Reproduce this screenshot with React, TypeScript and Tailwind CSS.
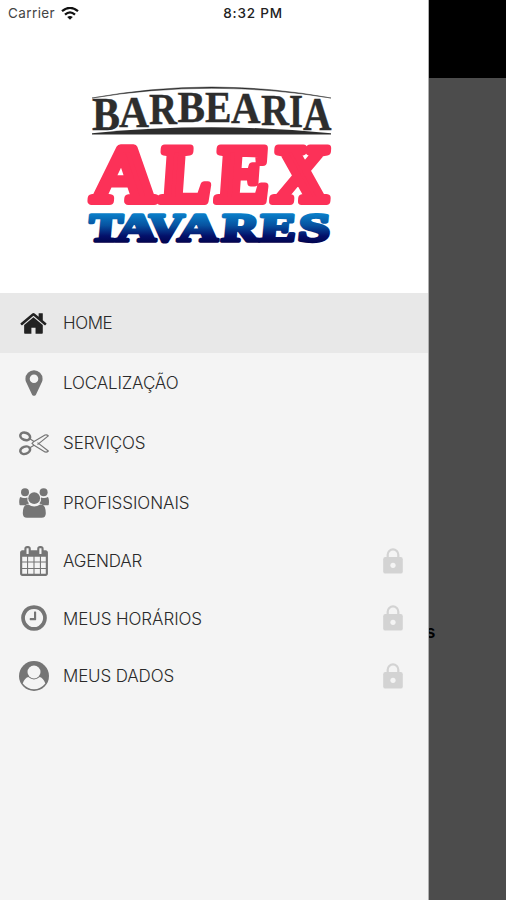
import type { ReactNode } from "react";
import clsx from "clsx";

const archLetters = [
  { char: "B", x: 92, base: 130.4, width: 28, size: 46.5 },
  { char: "A", x: 119, base: 127, width: 30, size: 45 },
  { char: "R", x: 149, base: 124, width: 28, size: 44 },
  { char: "B", x: 177.5, base: 122.3, width: 27.5, size: 43.5 },
  { char: "E", x: 205, base: 121.8, width: 26.5, size: 43.5 },
  { char: "A", x: 231, base: 123, width: 29.5, size: 43.5 },
  { char: "R", x: 261, base: 125.2, width: 28, size: 44.5 },
  { char: "I", x: 289, base: 127.4, width: 14, size: 46 },
  { char: "A", x: 303, base: 130, width: 28.5, size: 47 },
];

const alexLetters = [
  { char: "A", x: 91, width: 64 },
  { char: "L", x: 159.5, width: 50 },
  { char: "E", x: 215.5, width: 52 },
  { char: "X", x: 271.5, width: 56 },
];

const tavaresLetters = [
  { char: "T", x: 88, width: 33 },
  { char: "A", x: 115.5, width: 40 },
  { char: "V", x: 147, width: 35.5 },
  { char: "A", x: 177.5, width: 40 },
  { char: "R", x: 221, width: 37 },
  { char: "E", x: 259, width: 36 },
  { char: "S", x: 297.5, width: 31.5 },
];

function Logo() {
  return (
    <svg className="w-[260px] h-[170px]" viewBox="79 80 260 170">
      <defs>
        <linearGradient id="tavares" gradientUnits="userSpaceOnUse" x1="0" y1="-29" x2="0" y2="1">
          <stop offset="0" stopColor="#0a86cf" />
          <stop offset="0.45" stopColor="#0752a0" />
          <stop offset="0.8" stopColor="#03106a" />
          <stop offset="1" stopColor="#020652" />
        </linearGradient>
      </defs>
      <path d="M92 98Q212 76 331 98Q212 78.5 92 98Z" fill="#2d2d2d" stroke="#2d2d2d" strokeWidth="0.5" />
      <path d="M92 133.2Q212 121.5 331 133.2V134.4H92Z" fill="#2d2d2d" />
      <g fill="#2d2d2d" stroke="#2d2d2d" strokeWidth="0.4" fontFamily="Liberation Serif, serif" fontWeight="700">
        {archLetters.map((l, i) => (
          <text key={i} x={l.x} y={l.base} fontSize={l.size} textLength={l.width} lengthAdjust="spacingAndGlyphs">
            {l.char}
          </text>
        ))}
      </g>
      <g
        fill="#fc3158"
        stroke="#fc3158"
        strokeWidth="8"
        strokeLinejoin="round"
        fontFamily="Liberation Serif, serif"
        fontWeight="700"
        fontSize="80"
      >
        {alexLetters.map((l) => (
          <text
            key={l.char}
            transform={`translate(${l.x} 201) skewX(-4)`}
            textLength={l.width}
            lengthAdjust="spacingAndGlyphs"
          >
            {l.char}
          </text>
        ))}
      </g>
      <g
        fill="url(#tavares)"
        stroke="url(#tavares)"
        strokeWidth="3.6"
        strokeLinejoin="round"
        fontFamily="Liberation Serif, serif"
        fontWeight="700"
        fontSize="39.5"
      >
        {tavaresLetters.map((l, i) => (
          <text
            key={i}
            transform={`translate(${l.x} 241) skewX(-5)`}
            textLength={l.width}
            lengthAdjust="spacingAndGlyphs"
          >
            {l.char}
          </text>
        ))}
      </g>
    </svg>
  );
}

function HomeIcon() {
  return (
    <svg className="size-[29px] text-[#222]" viewBox="0 0 1792 1792" fill="currentColor">
      <path d="M1408 992v480q0 26-19 45t-45 19h-384v-384h-256v384h-384q-26 0-45-19t-19-45v-480q0-1 .5-3t.5-3l575-474 575 474q1 2 1 6zm223-69l-62 74q-8 9-21 11h-3q-13 0-21-7l-692-577-692 577q-12 8-24 7-13-2-21-11l-62-74q-8-10-7-23.5t11-21.5l719-599q32-26 76-26t76 26l244 204v-195q0-14 9-23t23-9h192q14 0 23 9t9 23v408l219 182q10 8 11 21.5t-7 23.5z" />
    </svg>
  );
}

function MarkerIcon() {
  return (
    <svg className="size-[30px]" viewBox="0 0 1792 1792" fill="currentColor">
      <path d="M1152 640q0-106-75-181t-181-75-181 75-75 181 75 181 181 75 181-75 75-181zm256 0q0 109-33 179l-364 774q-16 33-47.5 52t-67.5 19-67.5-19-46.5-52l-365-774q-33-70-33-179 0-212 150-362t362-150 362 150 150 362z" />
    </svg>
  );
}

function ScissorsIcon() {
  return (
    <svg className="size-[30px]" viewBox="0 0 30 30" fill="none" stroke="currentColor">
      <ellipse cx="6.2" cy="8.4" rx="5" ry="3.6" strokeWidth="2.5" transform="rotate(20 6.2 8.4)" />
      <ellipse cx="6.2" cy="22.2" rx="5" ry="3.6" strokeWidth="2.5" transform="rotate(-20 6.2 22.2)" />
      <path
        d="M10.5 10.6L15 13.4L26 7Q28 6.4 29.3 7.9L18.5 16.6M10.5 20L15 17.2L26 23.9Q28 24.4 29.3 23L18.5 14.6M15 13.4L13 15.4L15 17.2"
        strokeWidth="1.2"
        strokeLinejoin="round"
      />
    </svg>
  );
}

function UsersIcon() {
  return (
    <svg className="size-[30px]" viewBox="0 0 30 30" fill="currentColor">
      <circle cx="6" cy="4.2" r="4" />
      <circle cx="24.6" cy="4.2" r="4" />
      <path d="M1.6 9Q4 10.6 8.4 9.4Q7.8 13.3 10 15.4Q7.6 15.8 6.4 17.3H1.4Q.2 17.2.2 14.2Q.2 9.8 1.6 9Z" />
      <path d="M28.7 9Q26.3 10.6 22 9.4Q22.6 13.3 20.4 15.4Q22.8 15.8 24 17.3H29Q30 17.2 30 14.2Q30 9.8 28.7 9Z" />
      <circle cx="15.2" cy="10.2" r="5.9" />
      <path d="M9.3 16.6Q15.2 20.4 21.2 16.6Q26.8 16.4 26.8 25.2Q26.8 29.8 22.5 29.8H8Q3.8 29.8 3.8 25.2Q3.8 16.4 9.3 16.6Z" />
    </svg>
  );
}

function CalendarIcon() {
  return (
    <svg className="size-[30px]" viewBox="0 0 1792 1792" fill="currentColor">
      <path d="M192 1664h288v-288h-288v288zm352 0h320v-288h-320v288zm-352-352h288v-320h-288v320zm352 0h320v-320h-320v320zm-352-384h288v-288h-288v288zm736 736h320v-288h-320v288zm-384-736h320v-288h-320v288zm768 736h288v-288h-288v288zm-384-352h320v-320h-320v320zm-352-864v-288q0-13-9.5-22.5t-22.5-9.5h-64q-13 0-22.5 9.5t-9.5 22.5v288q0 13 9.5 22.5t22.5 9.5h64q13 0 22.5-9.5t9.5-22.5zm736 864h288v-320h-288v320zm-384-384h320v-288h-320v288zm384 0h288v-288h-288v288zm32-480v-288q0-13-9.5-22.5t-22.5-9.5h-64q-13 0-22.5 9.5t-9.5 22.5v288q0 13 9.5 22.5t22.5 9.5h64q13 0 22.5-9.5t9.5-22.5zm384-64v1280q0 52-38 90t-90 38h-1408q-52 0-90-38t-38-90v-1280q0-52 38-90t90-38h128v-96q0-66 47-113t113-47h64q66 0 113 47t47 113v96h384v-96q0-66 47-113t113-47h64q66 0 113 47t47 113v96h128q52 0 90 38t38 90z" />
    </svg>
  );
}

function ClockIcon() {
  return (
    <svg className="size-[30px]" viewBox="0 0 1792 1792" fill="currentColor">
      <path d="M1024 544v448q0 14-9 23t-23 9h-320q-14 0-23-9t-9-23v-64q0-14 9-23t23-9h224v-352q0-14 9-23t23-9h64q14 0 23 9t9 23zm416 352q0-148-73-273t-198-198-273-73-273 73-198 198-73 273 73 273 198 198 273 73 273-73 198-198 73-273zm224 0q0 209-103 385.5t-279.5 279.5-385.5 103-385.5-103-279.5-279.5-103-385.5 103-385.5 279.5-279.5 385.5-103 385.5 103 279.5 279.5 103 385.5z" />
    </svg>
  );
}

function AccountIcon() {
  return (
    <svg className="size-[30px]" viewBox="0 0 30 30">
      <circle cx="15" cy="15" r="15" fill="currentColor" />
      <path d="M3.7 22.5Q5.6 17 9.2 16Q15 20.8 20.8 16Q24.4 17 26.3 22.5Q21.5 28.3 15 28.3T3.7 22.5Z" fill="#f4f4f4" />
      <circle cx="15" cy="11" r="6.5" fill="#f4f4f4" />
    </svg>
  );
}

function LockIcon() {
  return (
    <svg className="w-5 h-[26px] text-[#d3d3d3]" viewBox="0 0 20 26">
      <path d="M4.7 10V6.7a5.3 5.3 0 0 1 10.6 0V10" fill="none" stroke="currentColor" strokeWidth="2.2" />
      <rect x="0.2" y="9" width="19.6" height="16.6" rx="2.2" fill="currentColor" />
      <circle cx="10" cy="17.3" r="2.6" fill="#f4f4f4" />
    </svg>
  );
}

type MenuItem = {
  label: string;
  icon: ReactNode;
  height: string;
  tracking: string;
  active?: boolean;
  locked?: boolean;
};

const menuItems: MenuItem[] = [
  { label: "HOME", icon: <HomeIcon />, height: "h-[60px]", tracking: "tracking-[-0.4px]", active: true },
  { label: "LOCALIZAÇÃO", icon: <MarkerIcon />, height: "h-[60px]", tracking: "tracking-[-0.15px]" },
  { label: "SERVIÇOS", icon: <ScissorsIcon />, height: "h-[60px]", tracking: "tracking-[-0.1px]" },
  { label: "PROFISSIONAIS", icon: <UsersIcon />, height: "h-[59px]", tracking: "tracking-[-0.05px]" },
  { label: "AGENDAR", icon: <CalendarIcon />, height: "h-[57.5px]", tracking: "tracking-[-0.2px]", locked: true },
  { label: "MEUS HORÁRIOS", icon: <ClockIcon />, height: "h-[57.5px]", tracking: "tracking-[-0.08px]", locked: true },
  { label: "MEUS DADOS", icon: <AccountIcon />, height: "h-[57.5px]", tracking: "tracking-[-0.15px]", locked: true },
];

function StatusBar() {
  return (
    <div className="grid grid-cols-[1fr_auto_1fr] items-center h-[27px] w-[506px] px-2 text-[13.5px] text-[#222]">
      <div className="flex items-center gap-1.5">
        <span className="text-[#444] tracking-[0.4px]">Carrier</span>
        <svg className="w-[18px] h-[14px]" viewBox="0 0 18 14" fill="none" stroke="#111" strokeWidth="2.3">
          <path d="M1 4.2Q9-2.4 17 4.2M4 7.6Q9 3.2 14 7.6" />
          <path d="M9 12.8L6.2 10Q9 7.8 11.8 10Z" fill="#111" stroke="none" />
        </svg>
      </div>
      <span className="font-medium tracking-[0.8px]">8:32 PM</span>
      <span />
    </div>
  );
}

export default function App() {
  return (
    <div className="flex w-[506px] h-[900px] overflow-hidden font-['Inter',sans-serif] bg-[#4c4c4c]">
      <aside className="w-[428px] shrink-0 bg-[#f4f4f4]">
        <header className="h-[293px] bg-white">
          <StatusBar />
          <div className="flex justify-center pt-[53px] pr-[10px]">
            <Logo />
          </div>
        </header>
        <nav>
          {menuItems.map((item) => (
            <a
              key={item.label}
              className={clsx("flex items-center pl-[19.4px] pr-[24.6px]", item.height, item.active && "bg-[#e8e8e8]")}
            >
              <span className="w-[30px] flex justify-center text-[#757575]">{item.icon}</span>
              <span
                className={clsx(
                  "flex-1 pl-[13.6px] pt-[2px] text-[17px] font-[350] text-[#2a2a2a] whitespace-nowrap",
                  item.tracking,
                )}
              >
                {item.label}
              </span>
              {item.locked && <LockIcon />}
            </a>
          ))}
        </nav>
      </aside>
      {/* Dimmed page behind the drawer */}
      <main className="flex-1 overflow-hidden border-l border-[#b0b0b0]">
        <div className="h-[78px] bg-black" />
        <div className="flex pt-[544px]">
          <span className="-ml-[3px] text-[17px] leading-[20px] font-semibold text-black">s</span>
        </div>
      </main>
    </div>
  );
}
